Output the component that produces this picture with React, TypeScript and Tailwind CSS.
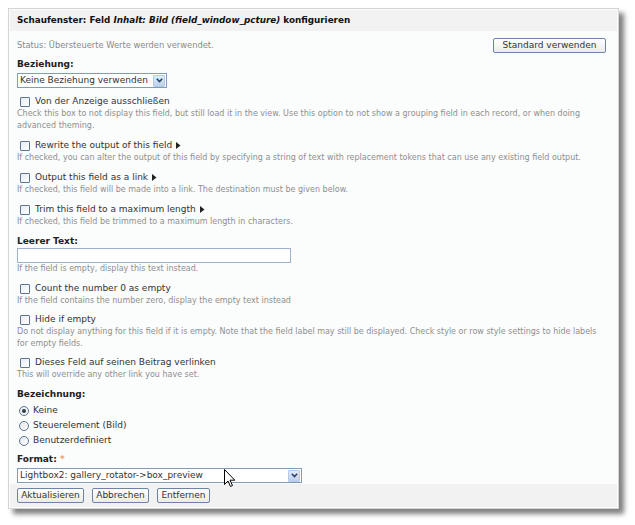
import React from 'react';

const font = "font-['DejaVu_Sans','Verdana',sans-serif]";

function Arrow() {
  return (
    <svg width="5" height="7" viewBox="0 0 5 7" className="ml-[4px] inline-block">
      <path d="M0 0 L4.5 3.5 L0 7 Z" fill="#222" />
    </svg>
  );
}

function Checkbox() {
  return (
    <span className="w-[10px] h-[10px] border border-[#5f7491] bg-gradient-to-br from-[#e8ebf0] to-white rounded-[1px] shrink-0 ml-[3px]" />
  );
}

function Radio({ checked }: { checked?: boolean }) {
  return (
    <span className="w-[10px] h-[10px] rounded-full border border-[#5f7491] bg-gradient-to-br from-[#e4e7ec] to-white shrink-0 ml-[2px] flex items-center justify-center">
      {checked && <span className="w-[4px] h-[4px] rounded-full bg-[#2f3b4a]" />}
    </span>
  );
}

function SelectArrow() {
  return (
    <span className="w-[12px] h-[12px] bg-gradient-to-b from-[#e2ecfb] to-[#bcd0ee] border border-[#b4c8e8] rounded-[1px] flex items-center justify-center shrink-0">
      <svg width="7" height="5" viewBox="0 0 7 5">
        <path d="M0.8 0.8 L3.5 3.5 L6.2 0.8" stroke="#2a3f6a" strokeWidth="1.6" fill="none" />
      </svg>
    </span>
  );
}

function Btn({ w, children }: { w: string; children: React.ReactNode }) {
  return (
    <button className={`${w} h-[15px] border border-[#6d84a8] rounded-[2px] bg-gradient-to-b from-white to-[#ecebe6] text-[9px] text-[#333] leading-none flex items-center justify-center`}>
      {children}
    </button>
  );
}

interface CheckItem {
  label: string;
  arrow?: boolean;
  desc: string[];
  mt: string;
}

const items1: CheckItem[] = [
  {
    label: 'Von der Anzeige ausschließen',
    desc: [
      'Check this box to not display this field, but still load it in the view. Use this option to not show a grouping field in each record, or when doing',
      'advanced theming.',
    ],
    mt: 'mt-[7px]',
  },
  {
    label: 'Rewrite the output of this field',
    arrow: true,
    desc: ['If checked, you can alter the output of this field by specifying a string of text with replacement tokens that can use any existing field output.'],
    mt: 'mt-[7px]',
  },
  {
    label: 'Output this field as a link',
    arrow: true,
    desc: ['If checked, this field will be made into a link. The destination must be given below.'],
    mt: 'mt-[7px]',
  },
  {
    label: 'Trim this field to a maximum length',
    arrow: true,
    desc: ['If checked, this field be trimmed to a maximum length in characters.'],
    mt: 'mt-[7px]',
  },
];

const items2: CheckItem[] = [
  {
    label: 'Count the number 0 as empty',
    desc: ['If the field contains the number zero, display the empty text instead'],
    mt: 'mt-[7px]',
  },
  {
    label: 'Hide if empty',
    desc: [
      'Do not display anything for this field if it is empty. Note that the field label may still be displayed. Check style or row style settings to hide labels',
      'for empty fields.',
    ],
    mt: 'mt-[6px]',
  },
  {
    label: 'Dieses Feld auf seinen Beitrag verlinken',
    desc: ['This will override any other link you have set.'],
    mt: 'mt-[6px]',
  },
];

function CheckRow({ item }: { item: CheckItem }) {
  return (
    <div className={item.mt}>
      <div className="h-[13px] flex items-center gap-[5px]">
        <Checkbox />
        <span className="text-[9px] text-[#333] leading-none flex items-center">
          {item.label}
          {item.arrow && <Arrow />}
        </span>
      </div>
      {item.desc.map((d, i) => (
        <div key={i} className="h-[12px] text-[8px] leading-[12px] text-[#8f8f8f] whitespace-nowrap">
          {d}
        </div>
      ))}
    </div>
  );
}

function Heading({ children, mt }: { children: React.ReactNode; mt: string }) {
  return (
    <div className={`${mt} h-[12px] text-[9px] leading-[12px] font-bold text-[#222]`}>{children}</div>
  );
}

export default function App() {
  return (
    <div className={`w-[635px] h-[525px] bg-white relative pt-[8px] pl-[8px] ${font}`}>
      <div className="w-[611px] h-[501px] border border-[#d4d4d4] bg-[#fbfcfc] shadow-[5px_5px_5px_rgba(0,0,0,0.5)] p-[1px] flex flex-col">
        <div className="h-[21px] bg-[#f2f2f2] flex items-center pl-[7px] text-[8.8px] font-bold text-[#111]">
          Schaufenster: Feld&nbsp;<i>Inhalt: Bild (field_window_pcture)</i>&nbsp;konfigurieren
        </div>

        <div className="flex-1 px-[7px]">
          <div className="mt-[7px] h-[15px] flex items-center justify-between pr-[4px]">
            <span className="text-[8.3px] text-[#8a8a8a]">Status: Übersteuerte Werte werden verwendet.</span>
            <Btn w="w-[113px]">Standard verwenden</Btn>
          </div>

          <Heading mt="mt-[5px]">Beziehung:</Heading>
          <div className="mt-[3px] w-[150px] h-[15px] border border-[#7f9db9] bg-white flex items-center pl-[2px] pr-[1px]">
            <span className="flex-1 text-[9px] text-[#333] leading-none">Keine Beziehung verwenden</span>
            <SelectArrow />
          </div>

          {items1.map((it) => (
            <CheckRow key={it.label} item={it} />
          ))}

          <Heading mt="mt-[7px]">Leerer Text:</Heading>
          <div className="mt-[1px] w-[274px] h-[15px] border border-[#9db2cf] bg-white" />
          <div className="h-[12px] text-[8px] leading-[12px] text-[#8f8f8f]">If the field is empty, display this text instead.</div>

          {items2.map((it) => (
            <CheckRow key={it.label} item={it} />
          ))}

          <Heading mt="mt-[7px]">Bezeichnung:</Heading>
          <div className="mt-[3px] flex flex-col">
            {[
              { l: 'Keine', c: true },
              { l: 'Steuerelement (Bild)', c: false },
              { l: 'Benutzerdefiniert', c: false },
            ].map((r) => (
              <div key={r.l} className="h-[15px] flex items-center gap-[4px]">
                <Radio checked={r.c} />
                <span className="text-[9px] text-[#333] leading-none">{r.l}</span>
              </div>
            ))}
          </div>

          <Heading mt="mt-[5px]">
            Format: <span className="text-[#f0a070] font-bold">*</span>
          </Heading>
          <div className="mt-[3px] w-[285px] h-[15px] border border-[#7f9db9] bg-white flex items-center pl-[2px] pr-[1px]">
            <span className="flex-1 text-[9px] text-[#333] leading-none">Lightbox2: gallery_rotator-&gt;box_preview</span>
            <SelectArrow />
          </div>
        </div>

        <div className="h-[23px] bg-[#f2f2f2] flex items-center gap-[8px] pl-[7px]">
          <Btn w="w-[67px]">Aktualisieren</Btn>
          <Btn w="w-[57px]">Abbrechen</Btn>
          <Btn w="w-[53px]">Entfernen</Btn>
        </div>
      </div>

      <svg width="12" height="19" viewBox="0 0 12 19" className="absolute left-[224px] top-[469px]">
        <path d="M0.5 0.5 L0.5 15.5 L4 12 L6.5 17.5 L8.5 16.5 L6 11.2 L10.8 11.2 Z" fill="white" stroke="black" strokeWidth="1" />
      </svg>
    </div>
  );
}
